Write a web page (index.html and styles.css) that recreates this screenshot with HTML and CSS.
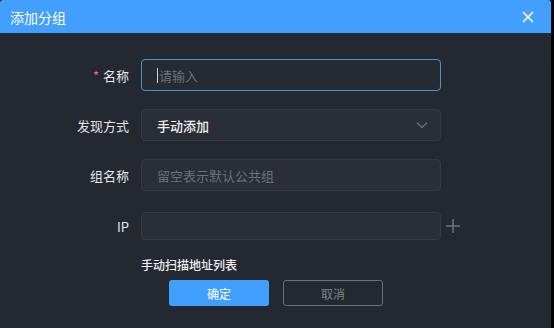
FILE: index.html
```html
<!DOCTYPE html>
<html lang="zh-CN">
<head>
    <meta charset="UTF-8">
    <meta name="viewport" content="width=device-width, initial-scale=1.0">
    <title>添加分组</title>
    <link rel="stylesheet" href="styles.css">
</head>
<body>

    <div class="dialog">
        <div class="dialog-header">
            <span class="dialog-title">添加分组</span>
            <svg class="close" width="12" height="12" viewBox="0 0 12 12">
                <path d="M1 1 L11 11 M11 1 L1 11" stroke="#fff" stroke-width="1.6" fill="none"/>
            </svg>
        </div>

        <div class="dialog-body">
            <div class="form-row">
                <label class="form-label"><span class="required">*</span>名称</label>
                <div class="field focused"><span class="caret"></span><span class="placeholder">请输入</span></div>
            </div>

            <div class="form-row">
                <label class="form-label">发现方式</label>
                <div class="field select">
                    <span class="value">手动添加</span>
                    <svg class="chevron" width="12" height="8" viewBox="0 0 12 8">
                        <path d="M1 1.5 L6 6.5 L11 1.5" stroke="#6b717b" stroke-width="1.3" fill="none"/>
                    </svg>
                </div>
            </div>

            <div class="form-row">
                <label class="form-label">组名称</label>
                <div class="field"><span class="placeholder">留空表示默认公共组</span></div>
            </div>

            <div class="form-row ip-row">
                <label class="form-label">IP</label>
                <div class="field short"></div>
                <svg class="plus" width="14" height="14" viewBox="0 0 14 14">
                    <path d="M7 0 V14 M0 7 H14" stroke="#6b717b" stroke-width="1.6" fill="none"/>
                </svg>
            </div>

            <div class="scan-title">手动扫描地址列表</div>

            <div class="actions">
                <button class="btn btn-primary">确定</button>
                <button class="btn btn-default">取消</button>
            </div>
        </div>
    </div>

</body>
</html>
```

FILE: styles.css
```css
body {
    margin: 0;
    padding: 0;
    background-color: #000;
    font-family: "Noto Sans CJK SC", "Noto Sans", sans-serif;
    width: 554px;
    height: 328px;
    overflow: hidden;
}

.dialog {
    width: 551px;
    height: 328px;
    background-color: #242830;
    border-radius: 3px 3px 0 0;
    overflow: hidden;
}

.dialog-header {
    height: 33px;
    background-color: #439ffd;
    display: flex;
    align-items: center;
    justify-content: space-between;
    padding: 0 17px 0 10px;
}

.dialog-title {
    color: #fff;
    font-size: 14px;
}

.dialog-body {
    padding-top: 26px;
}

.form-row {
    display: flex;
    align-items: center;
    margin-bottom: 18px;
}

.form-label {
    width: 141px;
    padding-right: 12px;
    box-sizing: border-box;
    text-align: right;
    color: #e4e6ea;
    font-size: 13px;
}

.required {
    color: #f56c6c;
    margin-right: 4px;
}

.field {
    width: 300px;
    height: 32px;
    box-sizing: border-box;
    background-color: #2a2e36;
    border: 1px solid #363a43;
    border-radius: 4px;
    display: flex;
    align-items: center;
    padding-left: 15px;
    font-size: 13px;
}

.field.focused {
    border-color: #4a8fd8;
    background-color: #262a32;
}

.caret {
    width: 1px;
    height: 15px;
    background-color: #d0d3d8;
    margin-right: 1px;
}

.placeholder {
    color: #6c717a;
}

.field.select {
    justify-content: space-between;
    padding-right: 12px;
}

.value {
    color: #f0f1f3;
    font-weight: 500;
}

.ip-row {
    margin-top: 21px;
    margin-bottom: 17px;
}

.field.short {
    height: 28px;
}

.plus {
    margin-left: 5px;
}

.scan-title {
    margin-left: 141px;
    color: #eef0f2;
    font-size: 12px;
    font-weight: 500;
    line-height: 16px;
}

.actions {
    display: flex;
    gap: 14px;
    margin-top: 7px;
    margin-left: 169px;
}

.btn {
    width: 100px;
    height: 26px;
    border-radius: 3px;
    font-family: inherit;
    font-size: 12px;
    box-sizing: border-box;
    cursor: pointer;
}

.btn-primary {
    background-color: #439ffd;
    border: none;
    color: #fff;
}

.btn-default {
    background-color: transparent;
    border: 1px solid #6b717b;
    color: #7d838c;
}
```
